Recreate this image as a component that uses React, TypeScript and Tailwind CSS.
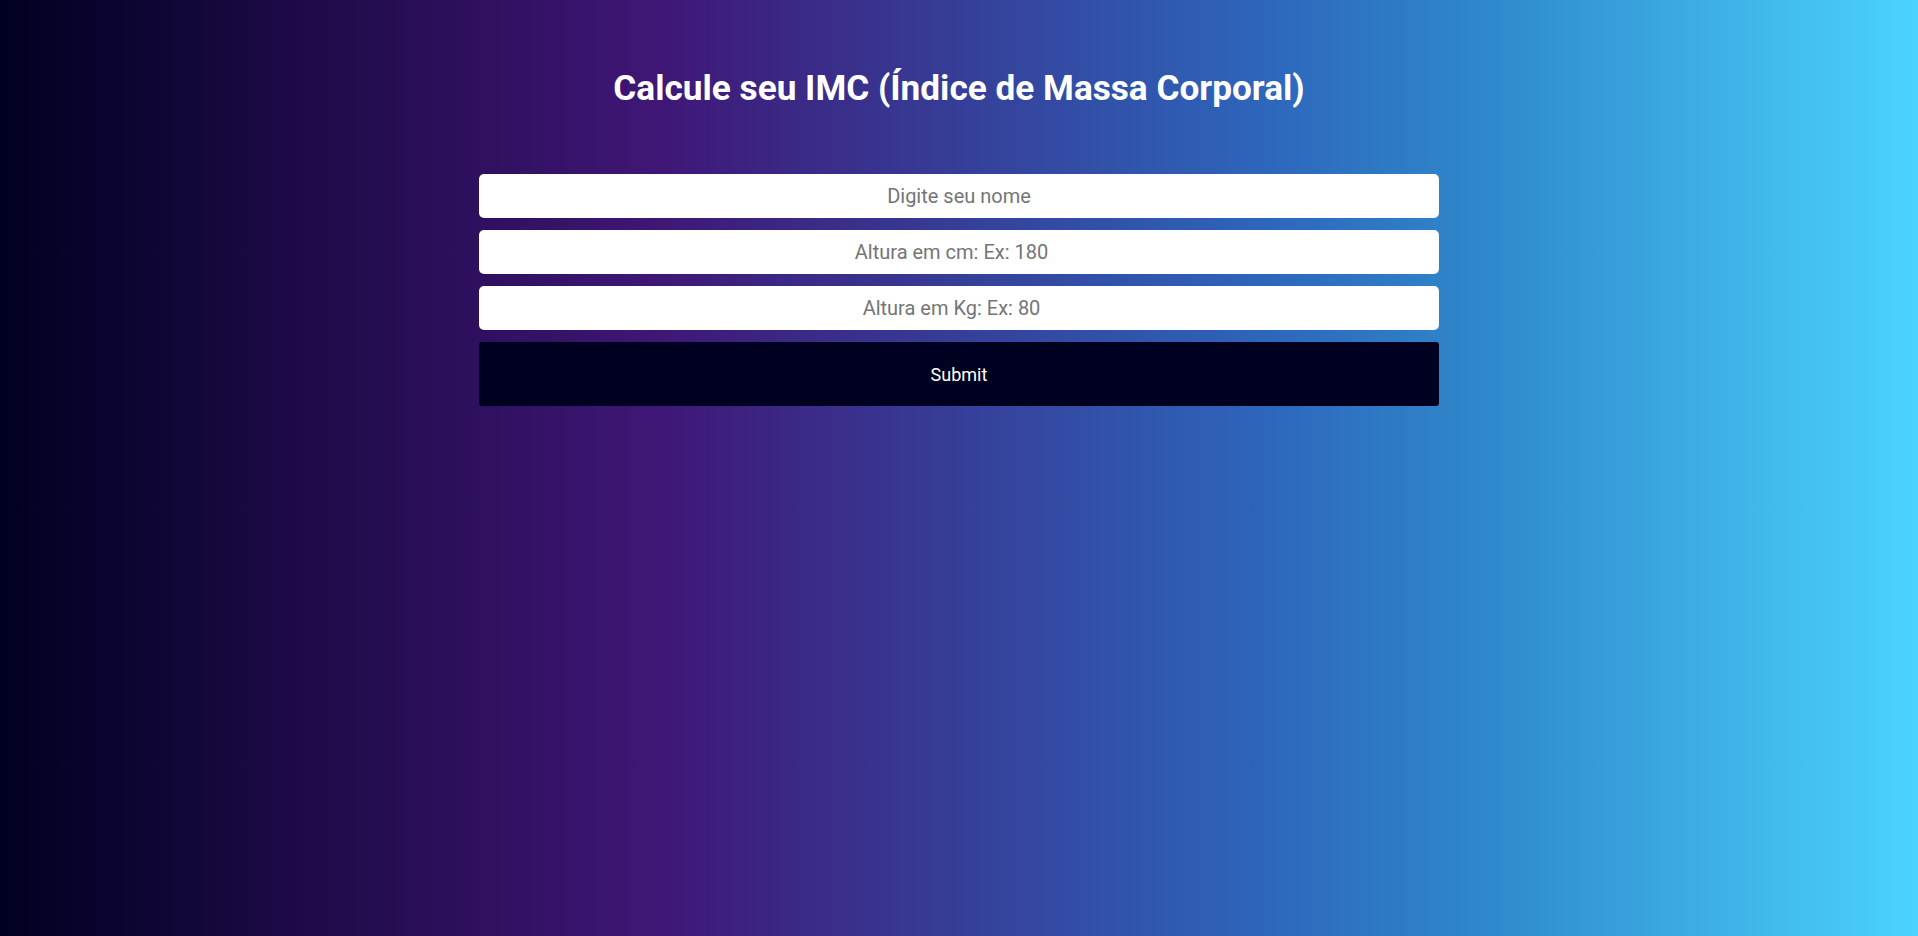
export default function App() {
  return (
    <div className="min-h-screen w-full bg-[linear-gradient(to_right,#000020_0%,#3f1675_34%,#2d66bb_66%,#2f8acc_78%,#4bd3ff_100%)] font-['Roboto',sans-serif]">
      <div className="flex flex-col items-center pt-[66px]">
        <h1 className="text-[35.2px] leading-[44px] font-bold text-white">
          Calcule seu IMC (Índice de Massa Corporal)
        </h1>
        <form className="mt-[64px] flex w-[960px] flex-col gap-3" onSubmit={(e) => e.preventDefault()}>
          <input
            type="text"
            placeholder="Digite seu nome"
            className="h-[44px] w-full rounded-[5px] bg-white text-center text-[20px] text-gray-800 outline-none placeholder:text-[#757575]"
          />
          <input
            type="number"
            placeholder="Altura em cm: Ex: 180"
            className="h-[44px] w-full rounded-[5px] bg-white text-center text-[20px] text-gray-800 outline-none placeholder:text-[#757575]"
          />
          <input
            type="number"
            placeholder="Altura em Kg: Ex: 80"
            className="h-[44px] w-full rounded-[5px] bg-white text-center text-[20px] text-gray-800 outline-none placeholder:text-[#757575]"
          />
          <button type="submit" className="h-[64px] w-full rounded-[3px] bg-[#000020] text-[18px] text-white">
            Submit
          </button>
        </form>
      </div>
    </div>
  );
}
